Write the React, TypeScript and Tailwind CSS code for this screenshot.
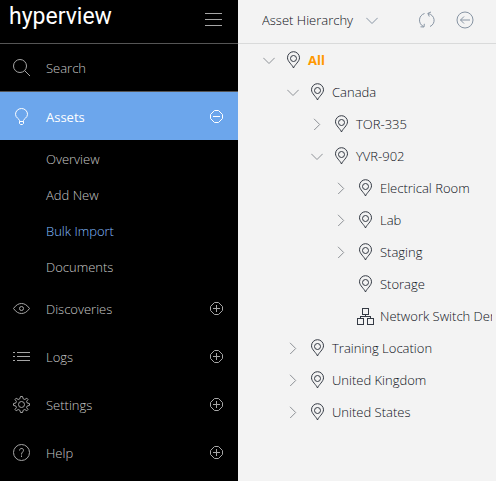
import type { ReactNode } from 'react';

type IconProps = { children: ReactNode; w?: number; h?: number; smooth?: boolean; className?: string };

function Icon({ children, w = 18, h = 18, smooth = false, className = '' }: IconProps) {
  return (
    <svg
      aria-hidden="true"
      width={w}
      height={h}
      viewBox={`0 0 ${w} ${h}`}
      fill="none"
      stroke="currentColor"
      strokeWidth="1"
      shapeRendering={smooth ? 'auto' : 'crispEdges'}
      className={`shrink-0 ${className}`}
    >
      {children}
    </svg>
  );
}

const SearchIcon = () => (
  <Icon smooth>
    <circle cx="7" cy="7" r="6.5" />
    <path d="M11.5 11.5 L17 17" />
  </Icon>
);

const BulbIcon = () => (
  <Icon smooth>
    <path d="M6.5 14.5 V13.5 C6.5 12 2.5 10.8 2.5 7.3 A6 5.8 0 0 1 14.5 7.3 C14.5 10.8 10.5 12 10.5 13.5 V14.5" />
    <path d="M6.5 14.5 H10.5 V16.5 L9.5 17.5 H7.5 L6.5 16.5 Z" />
  </Icon>
);

const EyeIcon = () => (
  <Icon smooth>
    <path d="M0.5 9.5 C3 6 5.5 4.5 8.5 4.5 C11.5 4.5 14 6 16.5 9.5 C14 13 11.5 14.5 8.5 14.5 C5.5 14.5 3 13 0.5 9.5 Z" />
    <circle cx="8.5" cy="9.5" r="2" />
  </Icon>
);

const ListIcon = () => (
  <Icon>
    <path d="M0 5.5 H2 M4 5.5 H17 M0 9.5 H2 M4 9.5 H17 M0 13.5 H2 M4 13.5 H17" />
  </Icon>
);

const GearIcon = () => (
  <Icon smooth>
    <path d="M7.5 1.5 H9.5 L10.2 3.8 L11.8 4.5 L13.8 3.2 L15 4.4 L13.6 6.4 L14.2 8 L16.5 8.6 V10.4 L14.2 11 L13.6 12.6 L15 14.6 L13.8 15.8 L11.8 14.5 L10.2 15.2 L9.5 17.5 H7.5 L6.8 15.2 L5.2 14.5 L3.2 15.8 L2 14.6 L3.4 12.6 L2.8 11 L0.5 10.4 V8.6 L2.8 8 L3.4 6.4 L2 4.4 L3.2 3.2 L5.2 4.5 L6.8 3.8 Z" />
    <circle cx="8.5" cy="9.5" r="3" />
  </Icon>
);

const HelpIcon = () => (
  <Icon smooth>
    <circle cx="8.5" cy="9.5" r="8" />
    <path d="M6.5 7.5 C6.5 4.8 10.5 4.8 10.5 7.3 C10.5 9 8.5 9 8.5 11.5 M8.5 12.5 V14" />
  </Icon>
);

const ToggleIcon = ({ open }: { open: boolean }) => (
  <Icon w={14} h={14} smooth>
    <path d="M4.5 1.5 H8.5 L12.5 5.5 V9.5 L8.5 13.5 H4.5 L0.5 9.5 V5.5 Z" />
    <path d="M3 7.5 H10" />
    {!open && <path d="M6.5 4 V11" />}
  </Icon>
);

const PinIcon = () => (
  <Icon w={17} h={18} smooth className="text-[#343a44]">
    <path d="M8.5 17 C7.5 14 2.5 10.5 2.5 6.8 A6 6.1 0 0 1 14.5 6.8 C14.5 10.5 9.5 14 8.5 17 Z" />
    <circle cx="8.5" cy="7.5" r="3" />
  </Icon>
);

const NetworkIcon = () => (
  <Icon w={17} h={18} className="text-[#343a44]">
    <path d="M5.5 1.5 H11.5 V7.5 H5.5 Z M0.5 11.5 H6.5 V17.5 H0.5 Z M10.5 11.5 H16.5 V17.5 H10.5 Z M8.5 8 V9.5 M3.5 11 V9.5 H13.5 V11" />
  </Icon>
);

const ChevronDown = ({ className = '' }: { className?: string }) => (
  <Icon w={12} h={12} smooth className={className}>
    <path d="M0.3 3.8 L6 9.5 L11.7 3.8" />
  </Icon>
);

const ChevronRight = () => (
  <Icon w={12} h={12} smooth>
    <path d="M3 0.8 L8.7 6.5 L3 12.2" />
  </Icon>
);

type NavItem = { label: string; icon: ReactNode; open?: boolean; children?: string[] };

const nav: NavItem[] = [
  { label: 'Assets', icon: <BulbIcon />, open: true, children: ['Overview', 'Add New', 'Bulk Import', 'Documents'] },
  { label: 'Discoveries', icon: <EyeIcon /> },
  { label: 'Logs', icon: <ListIcon /> },
  { label: 'Settings', icon: <GearIcon /> },
  { label: 'Help', icon: <HelpIcon /> },
];

type TreeNode = { label: string; state?: 'open' | 'closed'; kind?: 'network'; children?: TreeNode[] };

const tree: TreeNode[] = [
  {
    label: 'All',
    state: 'open',
    children: [
      {
        label: 'Canada',
        state: 'open',
        children: [
          { label: 'TOR-335', state: 'closed' },
          {
            label: 'YVR-902',
            state: 'open',
            children: [
              { label: 'Electrical Room', state: 'closed' },
              { label: 'Lab', state: 'closed' },
              { label: 'Staging', state: 'closed' },
              { label: 'Storage' },
              { label: 'Network Switch Demo', kind: 'network' },
            ],
          },
        ],
      },
      { label: 'Training Location', state: 'closed' },
      { label: 'United Kingdom', state: 'closed' },
      { label: 'United States', state: 'closed' },
    ],
  },
];

function Tree({ nodes, root = false }: { nodes: TreeNode[]; root?: boolean }) {
  return (
    <ul className={root ? '' : 'pl-6'}>
      {nodes.map((node) => (
        <li key={node.label}>
          <div className="flex h-8 items-center gap-1.5">
            {node.state ? (
              <button
                type="button"
                aria-label={`${node.state === 'open' ? 'Collapse' : 'Expand'} ${node.label}`}
                aria-expanded={node.state === 'open'}
                className="flex size-5 shrink-0 items-center justify-center text-[#8d9196]"
              >
                {node.state === 'open' ? <ChevronDown /> : <ChevronRight />}
              </button>
            ) : (
              <span className="size-5 shrink-0" />
            )}
            <a href="#" className="flex items-center gap-1.5 whitespace-nowrap">
              {node.kind === 'network' ? <NetworkIcon /> : <PinIcon />}
              <span className={root ? 'font-bold text-[#ff9800]' : ''}>{node.label}</span>
            </a>
          </div>
          {node.children && <Tree nodes={node.children} />}
        </li>
      ))}
    </ul>
  );
}

export default function App() {
  return (
    <div className="flex min-h-screen bg-[#f3f3f3] font-['Open_Sans',sans-serif] text-[13px] leading-5 font-light text-[#0c1018]">
      <aside className="w-[238px] shrink-0 bg-black text-[#a6a6a6]">
        <header className="flex h-11 items-center justify-between border-b border-[#555] pr-4 pl-[9px]">
          <a href="#" className="pb-2.5 font-['Roboto',sans-serif] text-[23px] leading-8 font-normal text-white">
            hyperview
          </a>
          <button type="button" aria-label="Toggle menu" className="pb-1">
            <Icon w={17} h={14}>
              <path d="M0 0.5 H17 M0 6.5 H17 M0 12.5 H17" />
            </Icon>
          </button>
        </header>
        <nav>
          <button type="button" className="flex h-12 w-full items-center gap-[15px] border-b border-[#555] pl-[13px]">
            <SearchIcon />
            <span className="text-[#c8c8c8]">Search</span>
          </button>
          {nav.map((item) => (
            <div key={item.label}>
              <button
                type="button"
                aria-expanded={!!item.open}
                className={`flex h-12 w-full items-center gap-[15px] pr-3.5 pl-[13px] ${item.open ? 'bg-[#6ca6ec] text-white' : ''}`}
              >
                {item.icon}
                <span className={`flex-1 pt-0.5 text-left ${item.open ? 'font-normal' : 'text-[#c8c8c8]'}`}>
                  {item.label}
                </span>
                <ToggleIcon open={!!item.open} />
              </button>
              {item.children && (
                <ul>
                  {item.children.map((child) => (
                    <li key={child}>
                      <a
                        href="#"
                        className={`flex h-9 items-center pt-0.5 pl-[46px] ${child === 'Bulk Import' ? 'text-[#84bcff]' : 'text-[#c8c8c8]'}`}
                      >
                        {child}
                      </a>
                    </li>
                  ))}
                </ul>
              )}
            </div>
          ))}
        </nav>
      </aside>
      <main className="min-w-0 flex-1">
        <header className="flex h-11 items-center justify-between border-b border-[#d9dada] pr-[22px] pb-1 pl-6">
          <div className="relative">
            <select aria-label="View" className="h-7 appearance-none bg-transparent pr-6">
              <option>Asset Hierarchy</option>
            </select>
            <ChevronDown className="pointer-events-none absolute top-2 right-0 text-[#8794a3]" />
          </div>
          <div className="flex gap-5 text-[#8794a3]">
            <button type="button" aria-label="Refresh">
              <Icon smooth>
                <path d="M6.5 2.5 C0 4.5 0 13 5.5 15.5 M10 2.5 C17.5 4 18 13 12 15.5" />
                <path d="M2.5 15.8 L6 16 L6.3 12.8 M13 1 L9.8 2.4 L11.3 5.5" />
              </Icon>
            </button>
            <button type="button" aria-label="Back">
              <Icon smooth>
                <circle cx="9" cy="9" r="8" />
                <path d="M14 9 H4.5 M8 5.5 L4.5 9 L8 12.5" />
              </Icon>
            </button>
          </div>
        </header>
        <div className="mr-1 overflow-hidden pl-[21px]">
          <Tree nodes={tree} root />
        </div>
      </main>
    </div>
  );
}
